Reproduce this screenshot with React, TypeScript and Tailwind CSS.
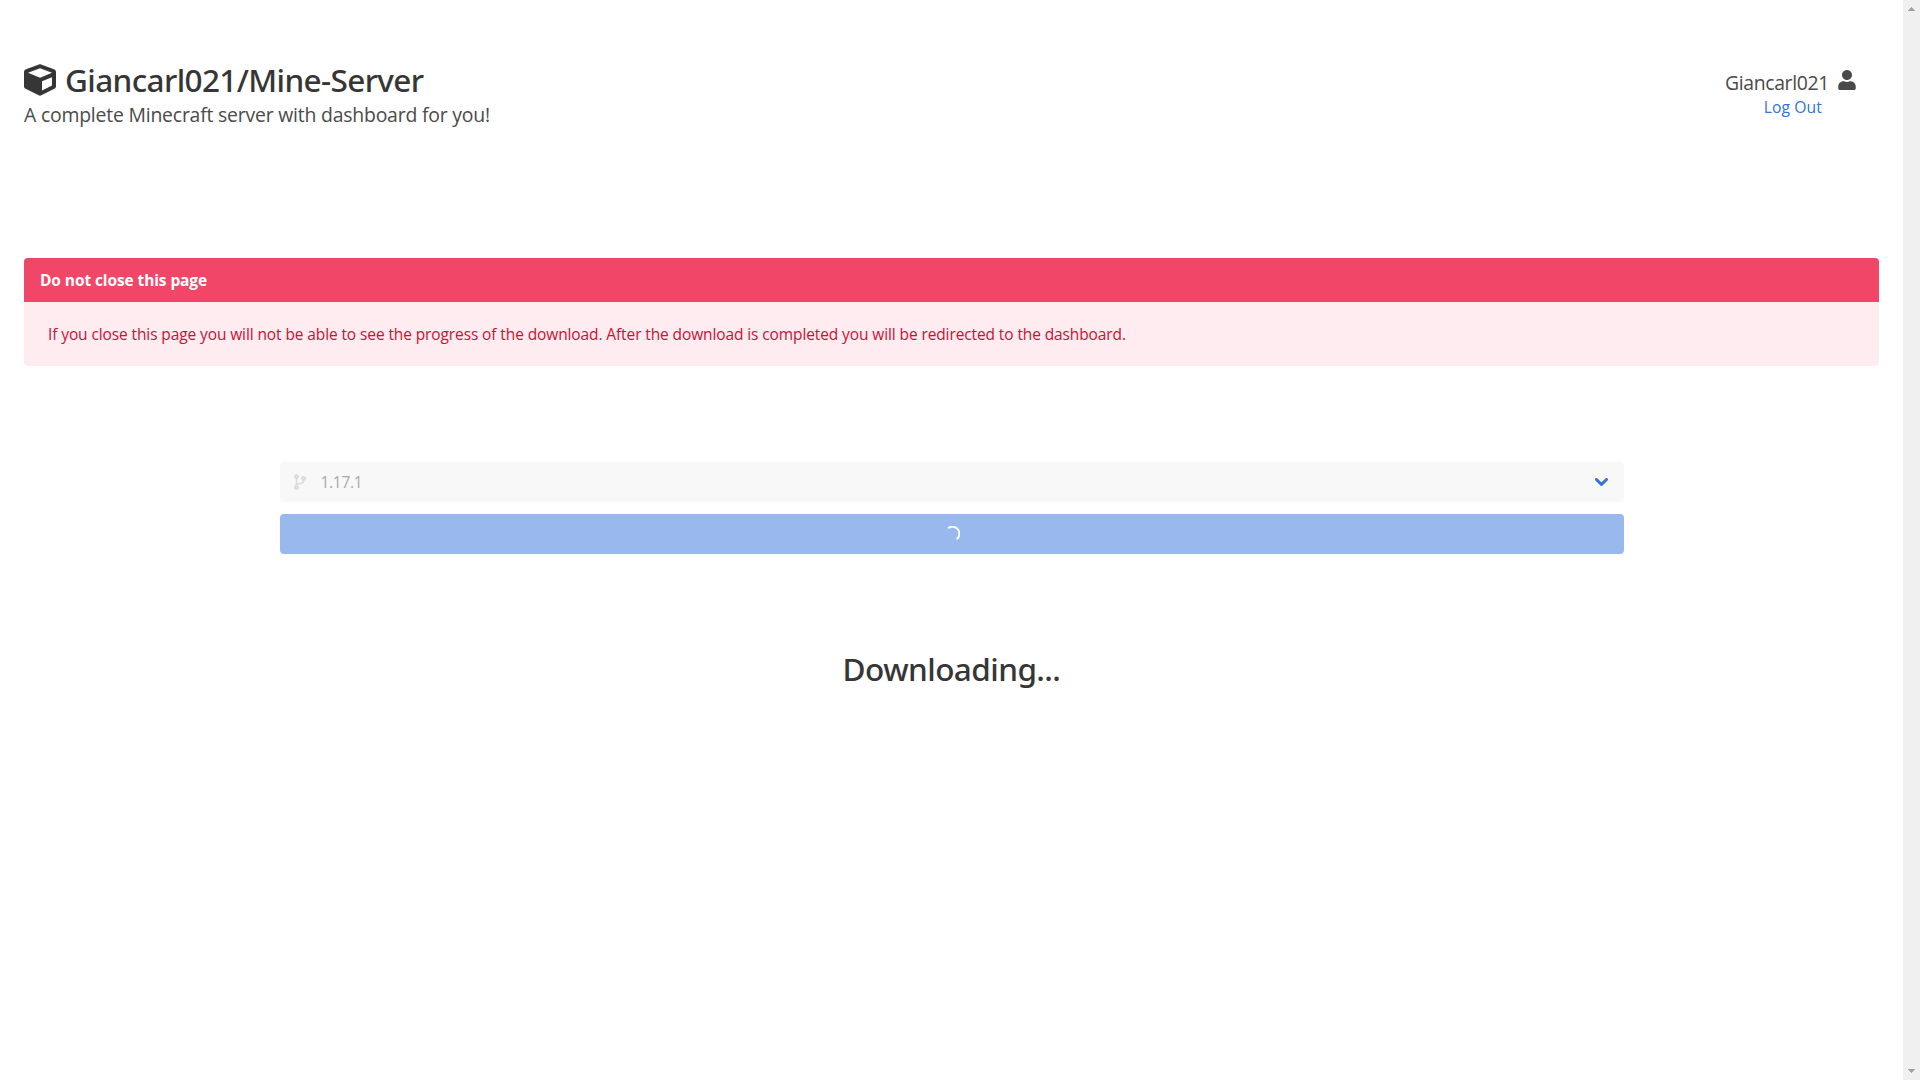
import { FaCodeBranch, FaCube, FaUser } from "react-icons/fa";

function Header() {
  return (
    <header className="flex h-[210px] items-start justify-between pt-[62px]">
      <div>
        <h1 className="flex h-9 items-center font-['Noto_Sans'] text-[31.5px] leading-9 font-medium tracking-[-0.62px] text-[#363636]">
          <FaCube className="mr-[9px] size-8 shrink-0" />
          <span>Giancarl021/Mine-Server</span>
        </h1>
        <h2 className="mt-1 text-[19.4px] leading-[25px] tracking-[-0.2px] text-[#4a4a4a]">
          A complete Minecraft server with dashboard for you!
        </h2>
      </div>
      <div className="mr-[22px] flex items-start">
        <div className="flex flex-col items-end">
          <span className="mt-2 text-[19.4px] leading-[25px] tracking-[-0.34px] text-[#4a4a4a]">Giancarl021</span>
          <a href="#" className="mr-[7px] text-[15.7px] leading-6 tracking-[0.1px] text-[#3273dc]">
            Log Out
          </a>
        </div>
        <FaUser className="mt-2 ml-2 size-5 text-[#4a4a4a]" />
      </div>
    </header>
  );
}

function Warning() {
  return (
    <article className="mt-12 overflow-hidden rounded bg-[#feecf0]">
      <div className="flex h-11 items-center bg-[#f14668] px-4 pt-0.5 text-[15.5px] font-bold tracking-[-0.1px] text-white">
        Do not close this page
      </div>
      <div className="flex h-16 items-center px-6 pt-0.5 text-[15.5px] tracking-[-0.11px] text-[#cc0f35]">
        If you close this page you will not be able to see the progress of the download. After the download is
        completed you will be redirected to the dashboard.
      </div>
    </article>
  );
}

function DownloadForm() {
  return (
    <div className="mx-auto mt-24 flex w-[1344px] flex-col gap-3">
      <div className="flex h-10 items-center rounded bg-[#f8f8f8] pr-[16px] pl-3">
        <FaCodeBranch className="size-4 text-[#dbdbdb]" />
        <span className="ml-[13px] flex-1 pt-0.5 text-[15.5px] tracking-[-0.3px] text-[#a8a8a8]">1.17.1</span>
        <svg className="h-[9px] w-[13px]" viewBox="0 0 13 9" fill="none" stroke="#3273dc" strokeWidth="3" strokeLinecap="round" strokeLinejoin="round">
          <path d="M1.5 1.5 6.5 6.5 11.5 1.5" />
        </svg>
      </div>
      <button className="flex h-10 items-center justify-center rounded bg-[#99b9ee]" aria-label="Downloading">
        <svg className="size-4" viewBox="0 0 16 16" fill="none" stroke="white" strokeWidth="2">
          <path d="M4.2 2.1A7 7 0 0 1 12.6 13.3" />
        </svg>
      </button>
    </div>
  );
}

function Scrollbar() {
  return (
    <div className="flex w-[17px] shrink-0 flex-col items-center justify-between bg-[#f0f0f0] py-[7px]">
      <svg className="h-1 w-[7px]" viewBox="0 0 7 4" fill="#a3a3a3" shapeRendering="crispEdges">
        <path d="M3 0h1v1h1v1h1v1h1v1H0V3h1V2h1V1h1z" />
      </svg>
      <svg className="h-1 w-[7px]" viewBox="0 0 7 4" fill="#a3a3a3" shapeRendering="crispEdges">
        <path d="M0 0h7v1H6v1H5v1H4v1H3V3H2V2H1V1H0z" />
      </svg>
    </div>
  );
}

export default function App() {
  return (
    <div className="flex h-screen overflow-hidden bg-white font-['Open_Sans',sans-serif]">
      <main className="flex-1 px-6">
        <Header />
        <Warning />
        <DownloadForm />
        <p className="mt-[97px] text-center font-['Noto_Sans'] text-[31.5px] leading-9 font-medium tracking-[-0.56px] text-[#363636]">
          Downloading...
        </p>
      </main>
      <Scrollbar />
    </div>
  );
}
